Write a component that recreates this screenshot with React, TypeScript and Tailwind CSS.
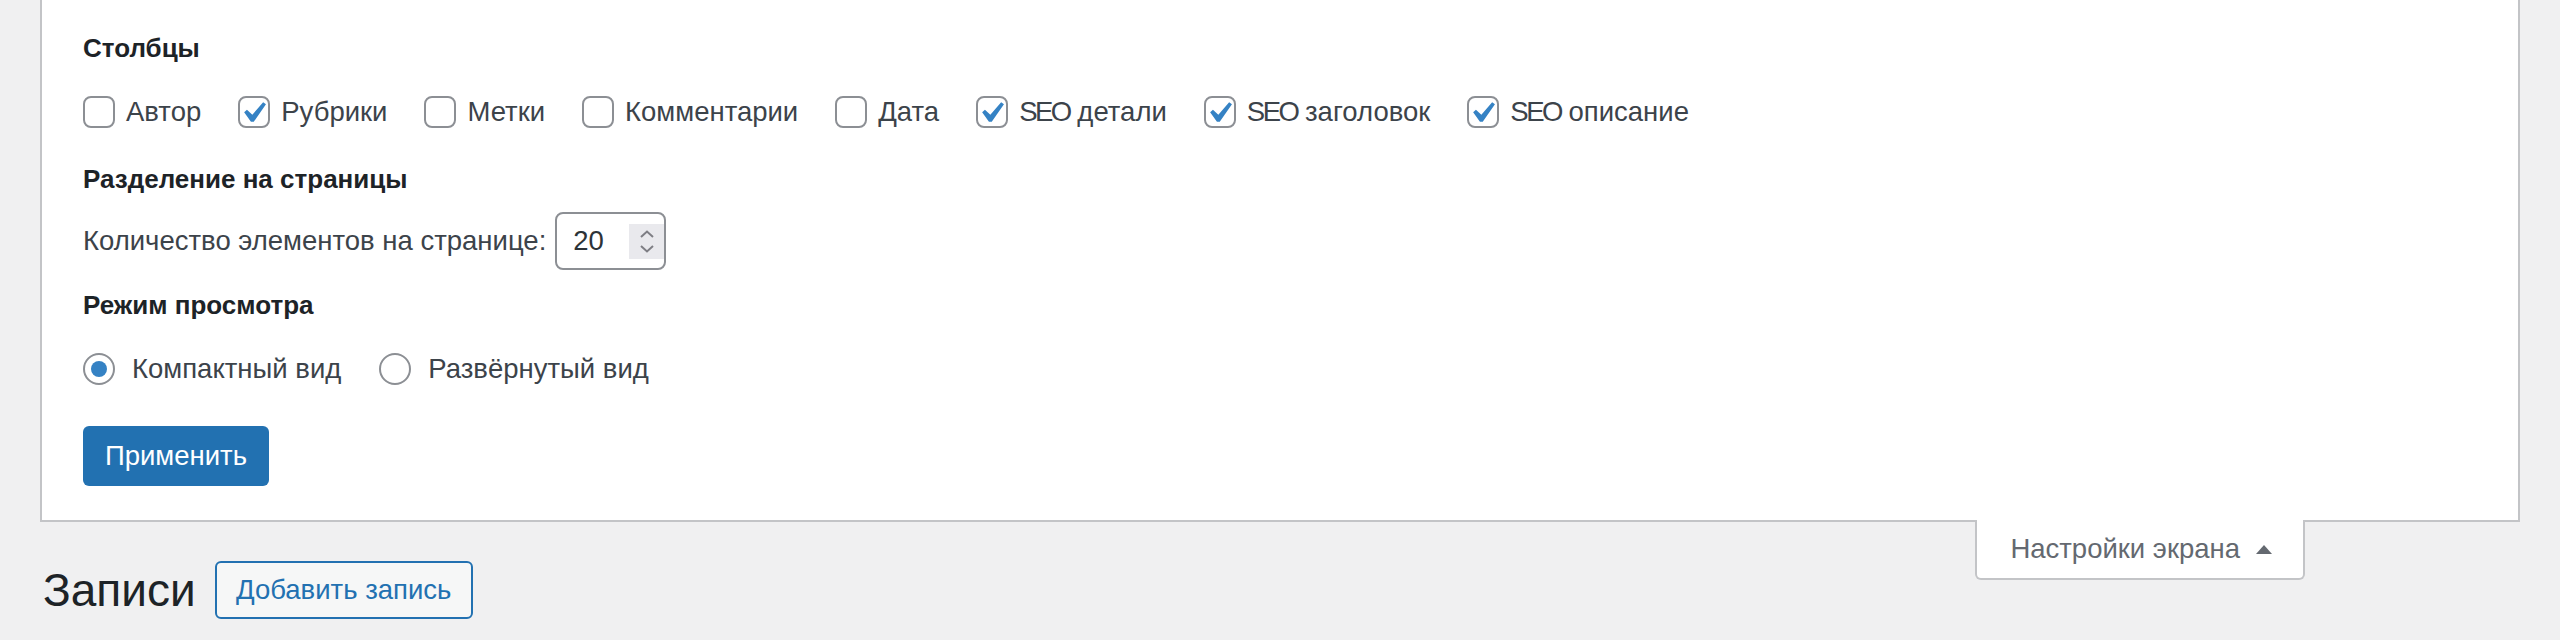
import React from "react";

const CHECK = "M14.83 4.89l1.34.94-5.81 8.38H9.02L5.78 9.67l1.34-1.25 2.57 2.4z";

function Checkbox({ checked }: { checked?: boolean }) {
  return (
    <span className="relative inline-block w-[32px] h-[32px] shrink-0 rounded-[8px] border-2 border-[#8c8f94] bg-white">
      {checked && (
        <svg className="absolute left-[-8px] top-[-6px] w-[42px] h-[42px]" viewBox="0 0 20 20">
          <path d={CHECK} fill="#3582c4" />
        </svg>
      )}
    </span>
  );
}

function Radio({ checked }: { checked?: boolean }) {
  return (
    <span className="flex items-center justify-center w-[32px] h-[32px] shrink-0 rounded-full border-2 border-[#8c8f94] bg-white">
      {checked && <span className="block w-[16px] h-[16px] rounded-full bg-[#3582c4]" />}
    </span>
  );
}

const columns: { seo?: boolean; label: string; checked: boolean }[] = [
  { label: "Автор", checked: false },
  { label: "Рубрики", checked: true },
  { label: "Метки", checked: false },
  { label: "Комментарии", checked: false },
  { label: "Дата", checked: false },
  { seo: true, label: "детали", checked: true },
  { seo: true, label: "заголовок", checked: true },
  { seo: true, label: "описание", checked: true },
];

export default function App() {
  return (
    <div className="w-[2560px] h-[640px] overflow-hidden bg-[#f0f0f1] font-['Liberation_Sans',Arial,sans-serif] text-[27.5px] text-[#3c434a]">
      <div className="mx-[40px] bg-white border-x-2 border-b-2 border-[#c3c4c7] pl-[41px] pt-[30px] pb-[34px]">
        <div className="h-[36px] flex items-center text-[26px] font-bold text-[#1d2327] leading-none">Столбцы</div>
        <div className="mt-[28px] h-[36px] flex items-center">
          {columns.map((c) => (
            <label key={c.label} className="flex items-center mr-[37px]">
              <Checkbox checked={c.checked} />
              <span className="ml-[11px] leading-none whitespace-pre">
                {c.seo && <span className="tracking-[-2.5px]">SEO</span>}
                {c.seo ? " " + c.label : c.label}
              </span>
            </label>
          ))}
        </div>
        <div className="mt-[31px] h-[36px] flex items-center text-[26px] font-bold text-[#1d2327] leading-none">Разделение на страницы</div>
        <div className="mt-[15px] h-[58px] flex items-center">
          <span className="leading-none">Количество элементов на странице:</span>
          <div className="ml-[9px] w-[111px] h-[58px] border-2 border-[#8c8f94] rounded-[8px] flex items-center pl-[16px] bg-white">
            <span className="flex-1 text-[#2c3338] leading-none">20</span>
            <span className="w-[35px] h-[35px] bg-[#e9e9ed] flex flex-col items-center justify-center gap-[7px]">
              <svg width="14" height="8" viewBox="0 0 14 8">
                <path d="M1 7 L7 1.5 L13 7" fill="none" stroke="#7e7e84" strokeWidth="2" />
              </svg>
              <svg width="14" height="8" viewBox="0 0 14 8">
                <path d="M1 1 L7 6.5 L13 1" fill="none" stroke="#7e7e84" strokeWidth="2" />
              </svg>
            </span>
          </div>
        </div>
        <div className="mt-[17px] h-[36px] flex items-center text-[26px] font-bold text-[#1d2327] leading-none">Режим просмотра</div>
        <div className="mt-[28px] h-[36px] flex items-center">
          <label className="flex items-center mr-[38px]">
            <Radio checked />
            <span className="ml-[17px] leading-none">Компактный вид</span>
          </label>
          <label className="flex items-center">
            <Radio />
            <span className="ml-[17px] leading-none">Развёрнутый вид</span>
          </label>
        </div>
        <button className="mt-[39px] w-[186px] h-[60px] rounded-[6px] bg-[#2271b1] text-white flex items-center justify-center leading-none">
          Применить
        </button>
      </div>

      <div className="flex items-start">
        <div className="pl-[43px] pt-[39px] flex items-center">
          <h1 className="h-[58px] flex items-center text-[46px] leading-none text-[#1d2327] font-normal">Записи</h1>
          <a className="ml-[19px] w-[258px] h-[58px] rounded-[6px] border-2 border-[#2271b1] bg-[#f6f7f7] text-[#2271b1] flex items-center justify-center leading-none">
            Добавить запись
          </a>
        </div>
        <div className="ml-auto mr-[255px] -mt-[2px] relative z-10 h-[60px] bg-white border-x-2 border-b-2 border-[#c3c4c7] rounded-b-[6px] flex items-center pl-[33px] pr-[31px] text-[#646970]">
          <span className="leading-none">Настройки экрана</span>
          <svg className="ml-[16px]" width="16" height="9" viewBox="0 0 16 9">
            <polygon points="0,9 8,0 16,9" fill="#646970" />
          </svg>
        </div>
      </div>
    </div>
  );
}
